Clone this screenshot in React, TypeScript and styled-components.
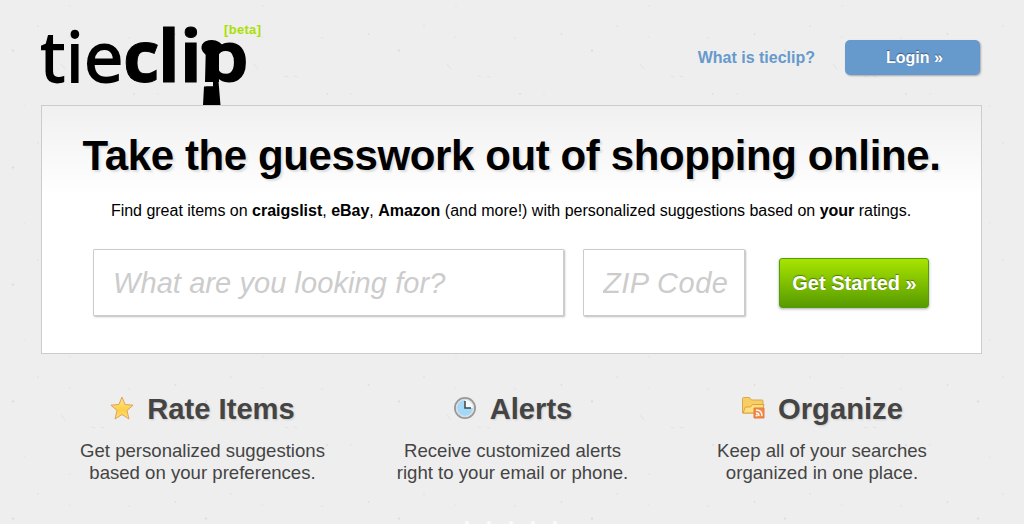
import type { ReactNode } from "react";
import styled, { createGlobalStyle } from "styled-components";

// fibres and specks of the paper texture, repeated over the page
const paper = encodeURIComponent(`
<svg xmlns="http://www.w3.org/2000/svg" width="193" height="117">
  <g fill="none" stroke="#e2e2e2" stroke-width="1" stroke-linecap="round">
    <path d="M61 64l4 5M92 76l3 1M101 76l3 1M24 106l1 0M128 38l2 0M69 37l1 0"/>
  </g>
  <g fill="#dfdfdf">
    <circle cx="13" cy="50.5" r="1.3"/><circle cx="175.5" cy="34" r="1"/>
    <circle cx="134" cy="94" r="1"/><circle cx="38" cy="26" r=".8"/>
    <circle cx="70" cy="6" r=".7"/><circle cx="158" cy="94" r=".7"/>
  </g>
</svg>`);

const GlobalStyle = createGlobalStyle`
  * {
    box-sizing: border-box;
  }

  body {
    margin: 0;
    overflow: hidden;
    font-family: "Liberation Sans", Arial, sans-serif;
    background: #eee url("data:image/svg+xml,${paper}");
  }
`;

const Page = styled.div`
  width: 941px;
  height: 524px;
  margin-left: 41px;
  display: flex;
  flex-direction: column;
`;

const Header = styled.header`
  height: 105px;
  flex-shrink: 0;
  display: flex;
  justify-content: space-between;
  align-items: flex-start;
`;

const Logo = styled.svg`
  display: block;
  width: 230px;
  height: 105px;
  font-family: "Open Sans", "Noto Sans", sans-serif;
`;

const Nav = styled.nav`
  display: flex;
  align-items: center;
  gap: 30px;
  padding: 40px 2px 0 0;
`;

const NavLink = styled.a`
  color: #6699cc;
  font-size: 16px;
  font-weight: bold;
`;

const LoginButton = styled.button`
  width: 135px;
  height: 35px;
  padding: 0 0 0 4px;
  border: 0;
  border-radius: 5px;
  background: #6699cc;
  box-shadow: 1px 1px 2px rgba(0, 0, 0, 0.3);
  color: #fff;
  font: bold 16px "Liberation Sans", Arial, sans-serif;
  text-shadow: 0 -1px 1px rgba(0, 0, 0, 0.4);
`;

const Hero = styled.main`
  height: 249px;
  flex-shrink: 0;
  border: 1px solid #ccc;
  background: linear-gradient(#f0f0f0, #fff 90px);
  display: flex;
  flex-direction: column;
  align-items: center;
`;

const Title = styled.h1`
  margin: 26px 0 0;
  font-size: 42px;
  line-height: 48px;
  letter-spacing: -0.39px;
  white-space: nowrap;
  color: #000;
  text-shadow: 2px 2px 2px #ddd;
`;

const Tagline = styled.p`
  margin: 22px 0 0;
  padding-right: 1px;
  font-size: 16px;
  line-height: 18px;
  letter-spacing: -0.01px;
  white-space: nowrap;
  color: #000;
`;

const SearchForm = styled.form`
  width: 100%;
  margin-top: 29px;
  padding-left: 51px;
  display: flex;
  align-items: center;
`;

const Field = styled.input<{ $width: number; $gap: number; $spacing: number }>`
  width: ${props => props.$width}px;
  height: 67px;
  margin-right: ${props => props.$gap}px;
  padding: 2px 0 0 19px;
  border: 1px solid #ccc;
  border-radius: 1px;
  background: #fff;
  box-shadow: 1px 1px 2px #bbb;
  outline: none;
  font: italic 29px "Liberation Sans", Arial, sans-serif;
  letter-spacing: ${props => props.$spacing}px;

  &::placeholder {
    color: #ccc;
    opacity: 1;
  }
`;

const StartButton = styled.button`
  width: 150px;
  height: 50px;
  padding: 2px 0 0 1px;
  border: 1px solid #549c0c;
  border-radius: 3px;
  background: linear-gradient(#a8e400, #579b00);
  box-shadow: 0 1px 3px rgba(0, 0, 0, 0.35);
  color: #fff;
  font: bold 20px "Liberation Sans", Arial, sans-serif;
  text-shadow: 0 -1px 1px rgba(0, 0, 0, 0.4);
`;

const Features = styled.section`
  display: grid;
  grid-template-columns: 323px 297px 322px;
  padding-top: 37px;
`;

const Feature = styled.article`
  display: flex;
  flex-direction: column;
  align-items: center;
`;

const FeatureHeading = styled.div`
  display: flex;
  align-items: center;
  gap: 13px;
`;

const FeatureIcon = styled.svg`
  width: 24px;
  height: 24px;
  margin-top: -2px;
  display: block;
`;

const FeatureTitle = styled.h2`
  margin: 0;
  font-size: 29.2px;
  line-height: 36px;
  color: #444;
  text-shadow: 1px 1px 2px #ccc;
`;

const FeatureText = styled.p`
  margin: 13px 0 0;
  font-size: 18.6px;
  line-height: 22px;
  text-align: center;
  white-space: nowrap;
  color: #444;
`;

const Dots = styled.div`
  display: flex;
  justify-content: center;
  gap: 18px;
  margin-top: auto;
  height: 3px;
  padding-right: 2px;
  overflow: hidden;
`;

const Dot = styled.span`
  width: 4px;
  height: 6px;
  border-radius: 2px;
  background: #fafafa;
`;

function StarIcon() {
  return (
    <FeatureIcon viewBox="0 0 24 24">
      <defs>
        <linearGradient id="star" x2="0" y2="1">
          <stop offset="0" stopColor="#ffe78c" />
          <stop offset="0.6" stopColor="#fdcf49" />
          <stop offset="1" stopColor="#ffe070" />
        </linearGradient>
      </defs>
      <path
        d="M12 1l3.100 7.500 8 .7-6.100 5.400 2 8.400-7-4.500-7 4.500 2-8.400L.9 9.200l8-.7z"
        fill="url(#star)"
        stroke="#dca35f"
        strokeLinejoin="round"
      />
    </FeatureIcon>
  );
}

function ClockIcon() {
  return (
    <FeatureIcon viewBox="0 0 24 24">
      <circle cx="12" cy="12" r="10" fill="#eef7fc" stroke="#999" strokeWidth="2" />
      <circle cx="12" cy="12" r="8.600" fill="#f4fafd" stroke="#ddd" strokeWidth="1.200" />
      <path d="M12 12V4a8 8 0 1 0 8 8z" fill="#a5d8f6" />
      <path d="M12 5v7h6" fill="none" stroke="#444" strokeWidth="1.500" />
    </FeatureIcon>
  );
}

function FolderIcon() {
  return (
    <FeatureIcon viewBox="0 0 24 24">
      <path d="M1.500 17V2.500q0-1 1-1h6l2 2.500H21q1 0 1 1v12z" fill="#f8cd62" stroke="#d8a850" />
      <path d="M2 17l2.500-6h5l2-2.500H23L21 17z" fill="#ffdf7d" stroke="#d9a444" />
      <path d="M13 12h10v10H13z" fill="#f28b48" stroke="#e27a38" />
      <path d="M15 14q6 0 6 6M15 17q3 0 3 3" fill="none" stroke="#fff" strokeWidth="1.300" />
      <circle cx="15.700" cy="19.500" r="1" fill="#fff" />
    </FeatureIcon>
  );
}

type FeatureItem = {
  title: string;
  icon: ReactNode;
  lines: [string, string];
};

const features: FeatureItem[] = [
  {
    title: "Rate Items",
    icon: <StarIcon />,
    lines: ["Get personalized suggestions", "based on your preferences."],
  },
  {
    title: "Alerts",
    icon: <ClockIcon />,
    lines: ["Receive customized alerts", "right to your email or phone."],
  },
  {
    title: "Organize",
    icon: <FolderIcon />,
    lines: ["Keep all of your searches", "organized in one place."],
  },
];

export default function App() {
  return (
    <>
      <GlobalStyle />
      <Page>
        <Header>
          <Logo viewBox="0 0 230 105">
            <text x="-1 25 43" y="81.500" fontSize="70" stroke="#000" strokeWidth="1.800">tie</text>
            <text x="82 117 139" y="81.500" fontSize="71" fontWeight="700" stroke="#000" strokeWidth="1">cli</text>
            <text
              x="158.500"
              y="81.500"
              fontSize="71"
              fontWeight="700"
              textLength="50"
              lengthAdjust="spacingAndGlyphs"
            >
              p
            </text>
            {/* knot and tail of the tie over the stem of the p */}
            <path d="M164 41.500q8-3 14 .5l3 2.500-3 9V82h-14l1-27q-4-3.500-4.500-6.500-.5-4.500 3.500-7z" />
            <path d="M162.500 82h9.500v4.500h-9.500z" fill="#eee" />
            <path d="M163 86.500h9v-5h5.500l2 23.500H162z" />
            <text
              x="183"
              y="34"
              fontFamily="Liberation Sans"
              fontSize="13"
              fontWeight="bold"
              textLength="37"
              fill="#aae000"
            >
              [beta]
            </text>
          </Logo>
          <Nav>
            <NavLink>What is tieclip?</NavLink>
            <LoginButton>Login »</LoginButton>
          </Nav>
        </Header>

        <Hero>
          <Title>Take the guesswork out of shopping online.</Title>
          <Tagline>
            Find great items on <b>craigslist</b>, <b>eBay</b>, <b>Amazon</b> (and more!) with
            personalized suggestions based on <b>your</b> ratings.
          </Tagline>
          <SearchForm>
            <Field $width={471} $gap={19} $spacing={0.08} placeholder="What are you looking for?" />
            <Field $width={162} $gap={34} $spacing={0.5} placeholder="ZIP Code" />
            <StartButton type="button">Get Started »</StartButton>
          </SearchForm>
        </Hero>

        <Features>
          {features.map(feature => (
            <Feature key={feature.title}>
              <FeatureHeading>
                {feature.icon}
                <FeatureTitle>{feature.title}</FeatureTitle>
              </FeatureHeading>
              <FeatureText>
                {feature.lines[0]}
                <br />
                {feature.lines[1]}
              </FeatureText>
            </Feature>
          ))}
        </Features>

        <Dots>
          {[0, 1, 2, 3, 4].map(dot => <Dot key={dot} />)}
        </Dots>
      </Page>
    </>
  );
}
